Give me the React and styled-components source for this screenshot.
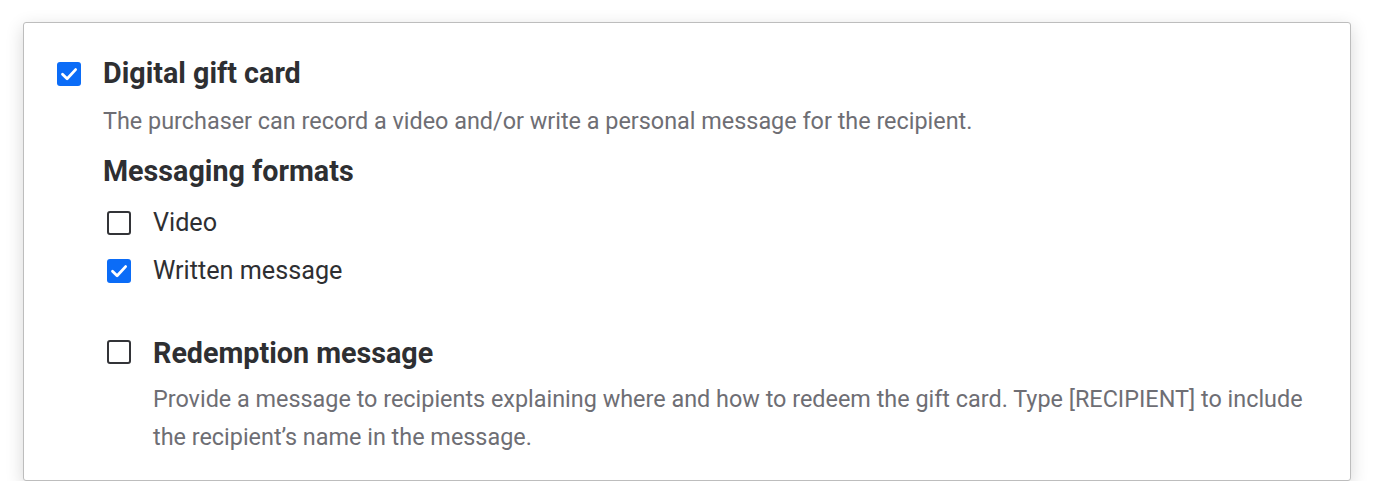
import React from "react";
import styled, { createGlobalStyle } from "styled-components";

const Global = createGlobalStyle`
  html, body { margin: 0; padding: 0; background: #ffffff; }
  body { font-family: Roboto, "Noto Sans", Arial, sans-serif; -webkit-font-smoothing: antialiased; }
`;

const Page = styled.div`
  padding: 22px 0 0 23px;
  width: 1328px;
`;

const Card = styled.section`
  box-sizing: border-box;
  width: 1328px;
  height: 459px;
  background: #fff;
  border: 1px solid #bdbdbd;
  border-radius: 3px;
  box-shadow: 0 5px 18px rgba(0, 0, 0, 0.16);
  padding: 34px 34px 0 33px;
`;

const Row = styled.div`
  display: flex;
  align-items: ${(p) => (p.$center ? "center" : "flex-start")};
  gap: 22px;
  margin-top: ${(p) => p.$mt || 0}px;
  margin-left: ${(p) => p.$indent || 0}px;
`;

const Box = styled.span`
  box-sizing: border-box;
  flex: 0 0 24px;
  width: 24px;
  height: 24px;
  margin-top: ${(p) => p.$mt || 0}px;
  border-radius: 3px;
  display: inline-flex;
  align-items: center;
  justify-content: center;
  background: ${(p) => (p.$checked ? "#0b6cf7" : "#fff")};
  border: ${(p) => (p.$checked ? "none" : "2px solid #333438")};
`;

const Column = styled.div`
  display: flex;
  flex-direction: column;
  flex: 1;
  min-width: 0;
`;

const Title = styled.div`
  font-size: 28.7px;
  font-weight: 700;
  line-height: 32px;
  color: #2e2f32;
  margin-top: ${(p) => p.$mt || 0}px;
`;

const Desc = styled.p`
  margin: ${(p) => p.$mt || 0}px 0 0;
  font-size: 23.4px;
  line-height: 38px;
  color: #6e6e74;
`;

const Label = styled.span`
  font-size: 25.2px;
  line-height: 32px;
  color: #2e2f32;
`;

const Check = ({ checked, mt }) => (
  <Box $checked={checked} $mt={mt}>
    {checked && (
      <svg width="24" height="24" viewBox="0 0 24 24" fill="none">
        <path d="M5.5 12.2l4.6 4.6L18.6 7.6" stroke="#fff" strokeWidth="2.8" strokeLinecap="round" strokeLinejoin="round" />
      </svg>
    )}
  </Box>
);

export default function App() {
  return (
    <>
      <Global />
      <Page>
        <Card>
          <Row>
            <Check checked mt={5} />
            <Column>
              <Title>Digital gift card</Title>
              <Desc $mt={13}>
                The purchaser can record a video and/or write a personal message for the recipient.
              </Desc>
              <Title $mt={15}>Messaging formats</Title>
              <Row $center $indent={4} $mt={20}>
                <Check />
                <Label>Video</Label>
              </Row>
              <Row $center $indent={4} $mt={16}>
                <Check checked />
                <Label>Written message</Label>
              </Row>
              <Row $indent={4} $mt={50}>
                <Check mt={3} />
                <Column>
                  <Title>Redemption message</Title>
                  <Desc $mt={11}>
                    Provide a message to recipients explaining where and how to redeem the gift card. Type [RECIPIENT] to include the recipient’s name in the message.
                  </Desc>
                </Column>
              </Row>
            </Column>
          </Row>
        </Card>
      </Page>
    </>
  );
}
